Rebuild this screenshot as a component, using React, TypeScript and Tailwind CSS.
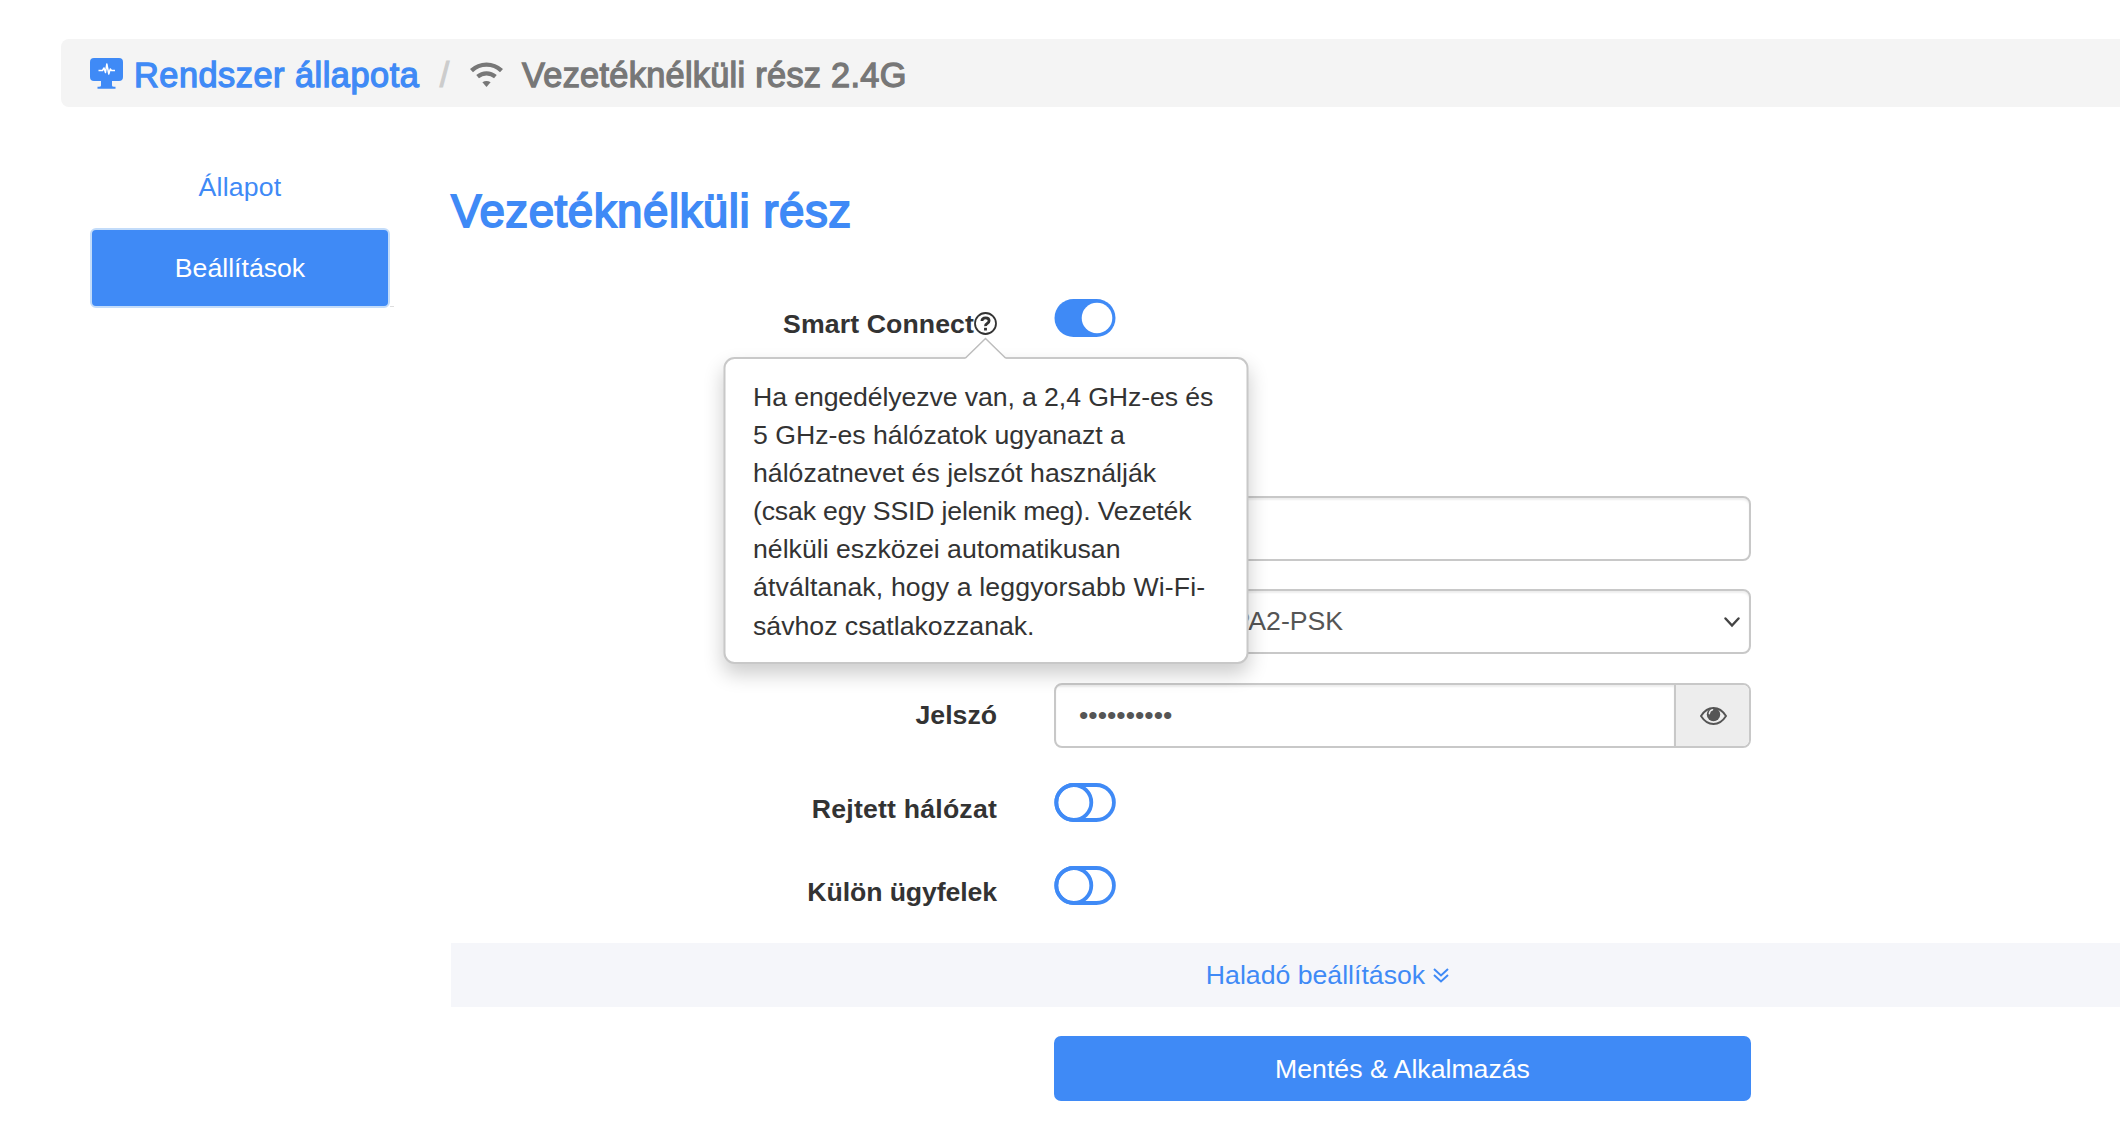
import React, { useState } from 'react';

interface ToggleProps {
  on: boolean;
  onChange: (on: boolean) => void;
}

const Toggle: React.FC<ToggleProps> = ({ on, onChange }) => (
  <button className="block h-[39px] w-[62px] shrink-0" role="switch" aria-checked={on} onClick={() => onChange(!on)}>
    <svg viewBox="0 0 62 39" className="block h-full w-full">
      {on ? (
        <>
          <rect x="0.500" width="61" height="38" rx="19" fill="#3f8af6" />
          <circle cx="43" cy="19" r="15.3" fill="#fff" />
        </>
      ) : (
        <g fill="none" stroke="#3f8af6" strokeWidth="3.8">
          <rect x="2.3" y="2" width="57.6" height="35" rx="17.5" />
          <circle cx="19.8" cy="19.5" r="17.5" />
        </g>
      )}
    </svg>
  </button>
);

const MonitorIcon = () => (
  <svg viewBox="0 0 33 31" className="h-[31px] w-[33px] shrink-0">
    <path
      fill="#3f8af6"
      d="M4 0h25a4 4 0 0 1 4 4v15a4 4 0 0 1-4 4h-7v4.500q0 1.200 2 1.200h1.500v2h-18v-2h1.500q2 0 2-1.200V23H4a4 4 0 0 1-4-4V4a4 4 0 0 1 4-4z"
    />
    <path
      d="M8.500 12.500h4l1.500-2.500 1.500 4.500 1.300-8.500 2 10 1.500-5 1.200 1.500H25"
      fill="none"
      stroke="#fff"
      strokeWidth="1.500"
      strokeLinejoin="round"
    />
  </svg>
);

const WifiIcon = () => (
  <svg viewBox="0 0 33 26" className="mt-[3px] h-[26px] w-[33px] shrink-0">
    <path d="M1.500 8.600Q8 2.600 16.500 2.600T31.500 8.600" fill="none" stroke="#777" strokeWidth="4.400" />
    <path d="M7.600 14.600Q11.500 11.300 16.500 11.300T25.400 14.600" fill="none" stroke="#777" strokeWidth="4.200" />
    <path d="M12.400 20.300q4.100-2.700 8.200 0L16.500 25z" fill="#777" />
  </svg>
);

const EyeIcon = () => (
  <svg viewBox="0 0 27 18" className="ml-[1px] h-[18px] w-[27px]">
    <path d="M1 9Q6 1 13.500 1T26 9Q21 17 13.500 17T1 9z" fill="none" stroke="#555" strokeWidth="1.900" />
    <circle cx="13.500" cy="7.500" r="6.700" fill="#555" />
    <path d="M9.300 6.700Q9.700 3.300 12.600 2.700" fill="none" stroke="#ededed" strokeWidth="1.400" strokeLinecap="round" />
  </svg>
);

const HelpIcon = () => (
  <svg viewBox="0 0 23 23" className="h-[23px] w-[23px]" fill="none" stroke="#333">
    <circle cx="11.500" cy="11.500" r="10.500" strokeWidth="1.800" />
    <path d="M7.900 9Q8.100 5.800 11.600 5.800T15.100 8.700Q15.100 10.400 13.200 11.500T11.500 14.200" strokeWidth="2.800" />
    <path d="M11.500 15.800v2.700" strokeWidth="2.900" />
  </svg>
);

const Popover = () => (
  <div className="absolute top-[45px] left-1/2 z-10 h-[307px] w-[525px] -translate-x-1/2 rounded-[11px] border-2 border-[#c8c8c8] bg-white px-[28px] pt-[19px] font-normal text-[#333] shadow-[0_10px_20px_rgba(0,0,0,0.2)]">
    <svg viewBox="0 0 42 22" className="absolute -top-[22px] left-1/2 h-[22px] w-[42px] -translate-x-1/2">
      <path d="M1 21.500 21 1.500 41 21.500V22H1z" fill="#fff" />
      <path d="M1 21 21 1.500 41 21" fill="none" stroke="#bdbdbd" strokeWidth="1.500" />
    </svg>
    <p className="text-left whitespace-nowrap">
      <span className="tracking-[-0.1px]">Ha engedélyezve van, a 2,4 GHz-es és</span>
      <br />
      5 GHz-es hálózatok ugyanazt a
      <br />
      hálózatnevet és jelszót használják
      <br />
      <span className="tracking-[-0.17px]">(csak egy SSID jelenik meg). Vezeték</span>
      <br />
      nélküli eszközei automatikusan
      <br />
      <span className="tracking-[0.13px]">átváltanak, hogy a leggyorsabb Wi-Fi-</span>
      <br />
      sávhoz csatlakozzanak.
    </p>
  </div>
);

interface RowProps {
  label?: React.ReactNode;
  className: string;
  labelClassName?: string;
  children: React.ReactNode;
}

const Row: React.FC<RowProps> = ({ label, className, labelClassName, children }) => (
  <div className={`flex items-start gap-[57px] ${className}`}>
    <div className={`flex w-[546px] shrink-0 justify-end font-bold text-[#333] ${labelClassName ?? ''}`}>{label}</div>
    {children}
  </div>
);

export default function App() {
  const [smartConnect, setSmartConnect] = useState(true);
  const [hidden, setHidden] = useState(false);
  const [isolated, setIsolated] = useState(false);
  const [ssid, setSsid] = useState('');
  const [password, setPassword] = useState('0123456789');
  const [visible, setVisible] = useState(false);

  return (
    <div className="h-[1137px] w-full overflow-hidden bg-white pt-[39px] pl-[61px] font-['Liberation_Sans',Arial,sans-serif] text-[26.67px] leading-[38.1px] text-[#333]">
      <div className="w-[2200px]">
        <nav className="flex h-[68px] items-center rounded-[8px] bg-[#f4f4f4] pl-[29px] text-[34.3px] whitespace-nowrap">
          <a href="#" className="flex items-center text-[#3f8af6]">
            <MonitorIcon />
            <span className="mt-[4px] ml-[11px] w-[286px] tracking-[0.52px] [-webkit-text-stroke:1.3px]">
              Rendszer állapota
            </span>
          </a>
          <span className="mt-[4px] ml-[16px] w-[17px] text-center text-[#ccc] [-webkit-text-stroke:1px]">/</span>
          <span className="ml-[17px] flex items-center text-[#777]">
            <WifiIcon />
            <span className="mt-[4px] ml-[19px] tracking-[0.3px] [-webkit-text-stroke:1.3px]">
              Vezetéknélküli rész 2.4G
            </span>
          </span>
        </nav>

        <div className="flex">
          <ul className="mt-[41px] ml-[29px] w-[304px] shrink-0 text-center">
            <li className="mr-[4px] flex h-[80px] items-center justify-center pb-[2px]">
              <a href="#" className="text-[#3f8af6] tracking-[0.2px]">
                Állapot
              </a>
            </li>
            <li className="flex items-end">
              <a
                href="#"
                className="flex h-[80px] w-[300px] items-center justify-center rounded-[6px] border-2 border-[#c3dcfa] bg-[#3f8af6] pt-[1px] text-white">
                Beállítások
              </a>
              <span className="mb-[1px] h-px grow bg-[#ddd]" />
            </li>
          </ul>

          <main className="ml-[57px] w-[1753px] pt-[80px]">
            <h1 className="h-[50px] text-[45.7px] leading-[50px] tracking-[0.5px] text-[#3f8af6] [-webkit-text-stroke:1.8px]">
              Vezetéknélküli rész
            </h1>

            <Row
              className="mt-[62px] h-[39px]"
              labelClassName="pt-[6px]"
              label={
                <>
                  <span className="tracking-[0.1px]">Smart Connect</span>
                  <span className="relative mt-[7px]">
                    <HelpIcon />
                    <Popover />
                  </span>
                </>
              }>
              <Toggle on={smartConnect} onChange={setSmartConnect} />
            </Row>

            <Row className="mt-[158px] h-[65px]">
              <input
                value={ssid}
                onChange={e => setSsid(e.target.value)}
                className="h-full w-[697px] rounded-[8px] border-2 border-[#c8c8c8] px-[24px] text-[#555] shadow-[inset_0_2px_2px_rgba(0,0,0,0.07)] outline-none"
              />
            </Row>

            <Row className="mt-[28px] h-[65px]">
              <div className="relative h-full w-[697px]">
                <select className="h-full w-full appearance-none rounded-[8px] border-2 border-[#c8c8c8] px-[23px] text-[#555] shadow-[inset_0_2px_2px_rgba(0,0,0,0.07)] outline-none">
                  <option>WPA-PSK/WPA2-PSK</option>
                </select>
                <svg viewBox="0 0 16 11" className="pointer-events-none absolute top-[28px] right-[11px] h-[11px] w-[16px]">
                  <path d="M1.500 1.500 8 8.500l6.500-7" fill="none" stroke="#444" strokeWidth="2.400" strokeLinecap="round" />
                </svg>
              </div>
            </Row>

            <Row className="mt-[29px] h-[65px]" labelClassName="pt-[13px]" label="Jelszó">
              <div className="flex h-full w-[697px] overflow-hidden rounded-[8px] border-2 border-[#c8c8c8]">
                <input
                  type={visible ? 'text' : 'password'}
                  value={password}
                  onChange={e => setPassword(e.target.value)}
                  className="h-full min-w-0 grow px-[23px] text-[#555] shadow-[inset_0_2px_2px_rgba(0,0,0,0.07)] outline-none"
                />
                <button
                  className="flex w-[75px] shrink-0 items-center justify-center border-l-2 border-[#c8c8c8] bg-[#ededed]"
                  onClick={() => setVisible(!visible)}>
                  <EyeIcon />
                </button>
              </div>
            </Row>

            <Row
              className="mt-[35px] h-[39px]"
              labelClassName="pt-[7px]"
              label={<span className="tracking-[0.2px]">Rejtett hálózat</span>}>
              <Toggle on={hidden} onChange={setHidden} />
            </Row>
            <Row
              className="mt-[44px] h-[39px]"
              labelClassName="pt-[7px]"
              label={<span className="tracking-[-0.1px]">Külön ügyfelek</span>}>
              <Toggle on={isolated} onChange={setIsolated} />
            </Row>

            <a href="#" className="mt-[38px] flex h-[64px] items-center justify-center bg-[#f5f6fa] text-[#3f8af6]">
              Haladó beállítások
              <svg viewBox="0 0 16 15" className="ml-[8px] h-[15px] w-[16px]" fill="none" stroke="#3f8af6" strokeWidth="2">
                <path d="M1 1l7 6.500L15 1M1 7l7 6.500L15 7" />
              </svg>
            </a>

            <button className="mt-[29px] ml-[603px] block h-[65px] w-[697px] rounded-[7px] bg-[#3f8af6] pt-[1px] text-white">
              Mentés &amp; Alkalmazás
            </button>
          </main>
        </div>
      </div>
    </div>
  );
}
